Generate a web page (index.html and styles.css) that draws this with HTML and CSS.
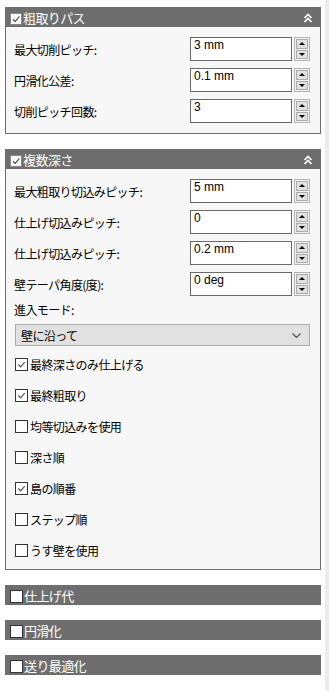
FILE: index.html
```html
<!DOCTYPE html>
<html lang="ja">
<head>
<meta charset="utf-8">
<link rel="stylesheet" href="styles.css">
</head>
<body>
<div class="page">
  <div class="main">
    <section class="panel">
      <div class="head">
        <span class="hcb checked"><svg viewBox="0 0 12 12"><path d="M2.5 6.5 L5 9 L10 3" /></svg></span>
        <span class="htitle">粗取りパス</span>
        <svg class="dchev" viewBox="0 0 10 10"><path d="M1.5 5 L5 1.5 L8.5 5 M1.5 9 L5 5.5 L8.5 9"/></svg>
      </div>
      <div class="body">
        <div class="frow"><span class="lbl">最大切削ピッチ:</span><span class="inp">3 mm</span><span class="spin"><span class="sb up"></span><span class="sb dn"></span></span></div>
        <div class="frow"><span class="lbl">円滑化公差:</span><span class="inp">0.1 mm</span><span class="spin"><span class="sb up"></span><span class="sb dn"></span></span></div>
        <div class="frow"><span class="lbl">切削ピッチ回数:</span><span class="inp">3</span><span class="spin"><span class="sb up"></span><span class="sb dn"></span></span></div>
      </div>
    </section>

    <section class="panel">
      <div class="head">
        <span class="hcb checked"><svg viewBox="0 0 12 12"><path d="M2.5 6.5 L5 9 L10 3" /></svg></span>
        <span class="htitle">複数深さ</span>
        <svg class="dchev" viewBox="0 0 10 10"><path d="M1.5 5 L5 1.5 L8.5 5 M1.5 9 L5 5.5 L8.5 9"/></svg>
      </div>
      <div class="body body2">
        <div class="frow"><span class="lbl">最大粗取り切込みピッチ:</span><span class="inp">5 mm</span><span class="spin"><span class="sb up"></span><span class="sb dn"></span></span></div>
        <div class="frow"><span class="lbl">仕上げ切込みピッチ:</span><span class="inp">0</span><span class="spin"><span class="sb up"></span><span class="sb dn"></span></span></div>
        <div class="frow"><span class="lbl">仕上げ切込みピッチ:</span><span class="inp">0.2 mm</span><span class="spin"><span class="sb up"></span><span class="sb dn"></span></span></div>
        <div class="frow"><span class="lbl">壁テーパ角度(度):</span><span class="inp">0 deg</span><span class="spin"><span class="sb up"></span><span class="sb dn"></span></span></div>
        <div class="mlabel">進入モード:</div>
        <div class="select"><span>壁に沿って</span><svg class="schev" viewBox="0 0 9 5"><path d="M0.5 0.5 L4.5 4.5 L8.5 0.5"/></svg></div>
        <div class="checks">
          <label class="crow"><span class="cb"><svg viewBox="0 0 12 12"><path d="M2.5 6 L5 8.5 L9.5 3.5" /></svg></span>最終深さのみ仕上げる</label>
          <label class="crow"><span class="cb"><svg viewBox="0 0 12 12"><path d="M2.5 6 L5 8.5 L9.5 3.5" /></svg></span>最終粗取り</label>
          <label class="crow"><span class="cb"></span>均等切込みを使用</label>
          <label class="crow"><span class="cb"></span>深さ順</label>
          <label class="crow"><span class="cb"><svg viewBox="0 0 12 12"><path d="M2.5 6 L5 8.5 L9.5 3.5" /></svg></span>島の順番</label>
          <label class="crow"><span class="cb"></span>ステップ順</label>
          <label class="crow"><span class="cb"></span>うす壁を使用</label>
        </div>
      </div>
    </section>

    <div class="bar"><span class="bcb"></span><span class="htitle">仕上げ代</span></div>
    <div class="bar"><span class="bcb"></span><span class="htitle">円滑化</span></div>
    <div class="bar"><span class="bcb"></span><span class="htitle">送り最適化</span></div>
  </div>
  <div class="scroll"></div>
</div>
</body>
</html>
```

FILE: styles.css
```css
* { box-sizing: border-box; }
html, body { margin: 0; padding: 0; background: #fff; }
body {
  font-family: "Noto Sans CJK JP", "Noto Sans", sans-serif;
  font-size: 12px;
  color: #000;
}
.page {
  display: flex;
  height: 691px;
}
.main {
  width: 321px;
  padding: 7px 0 0 5px;
  display: flex;
  flex-direction: column;
  gap: 15px;
}
.scroll {
  width: 4px;
  margin-left: 4px;
  background: #ececec;
}
.panel {
  border: 1px solid #6e6e6e;
  background: #f7f7f7;
}
.head {
  height: 19px;
  background: #6e6e6e;
  display: flex;
  align-items: center;
  padding-left: 4px;
  color: #fff;
}
.hcb {
  width: 12px;
  height: 12px;
  background: #fff;
  border: 1px solid #888;
  display: flex;
  margin-top: 2px;
}
.hcb svg { width: 10px; height: 10px; fill: none; stroke: #333; stroke-width: 1.4; }
.htitle {
  font-size: 13px;
  line-height: 19px;
  color: #fff;
  margin-left: 1px;
  letter-spacing: -0.6px;
}
.dchev {
  margin-left: auto;
  margin-right: 7px;
  width: 10px;
  height: 10px;
  fill: none;
  stroke: #fff;
  stroke-width: 1.6;
}
.body {
  padding: 10px 10px 10px 8px;
  display: flex;
  flex-direction: column;
  gap: 7px;
}
.body2 { padding-bottom: 3px; }
.frow {
  display: grid;
  grid-template-columns: 1fr 102px 16px;
  column-gap: 2px;
  height: 24px;
  align-items: center;
}
.lbl { letter-spacing: -0.6px; }
.inp {
  height: 24px;
  background: #fff;
  border: 1px solid #6a6a6a;
  padding: 0 0 0 3px;
  line-height: 14px;
  font-family: "Liberation Sans", sans-serif;
  font-size: 12px;
}
.spin {
  height: 24px;
  border: 1px solid #b4b4b4;
  display: flex;
  flex-direction: column;
  padding: 1px;
  gap: 1px;
  background: #f0f0f0;
}
.sb {
  flex: 1;
  background: #e1e1e1;
  border: 1px solid #adadad;
  position: relative;
}
.sb::after {
  content: "";
  position: absolute;
  left: 50%;
  top: 50%;
  margin-left: -3px;
  border-left: 3px solid transparent;
  border-right: 3px solid transparent;
}
.up::after { border-bottom: 3px solid #000; margin-top: -2px; }
.dn::after { border-top: 3px solid #000; margin-top: -1px; }
.mlabel {
  line-height: 14px;
  margin-top: 0;
  letter-spacing: -0.6px;
}
.select {
  height: 22px;
  margin-left: 1px;
  background: #e1e1e1;
  border: 1px solid #adadad;
  display: flex;
  align-items: center;
  padding: 0 8px 0 5px;
  letter-spacing: -0.6px;
}
.schev {
  margin-left: auto;
  width: 9px;
  height: 5px;
  fill: none;
  stroke: #555;
  stroke-width: 1.2;
}
.checks {
  display: flex;
  flex-direction: column;
  margin-top: -4px;
  margin-left: 1px;
}
.crow {
  height: 31px;
  display: flex;
  align-items: center;
  gap: 2px;
  letter-spacing: -0.6px;
}
.cb {
  width: 13px;
  height: 13px;
  background: #fff;
  border: 1px solid #333;
  display: flex;
}
.cb svg { width: 11px; height: 11px; fill: none; stroke: #555; stroke-width: 1.3; }
.bar {
  height: 20px;
  background: #6e6e6e;
  display: flex;
  align-items: center;
  padding-left: 5px;
}
.bcb {
  width: 13px;
  height: 13px;
  background: #fff;
  border: 1px solid #333;
  margin-top: 2px;
}
```
